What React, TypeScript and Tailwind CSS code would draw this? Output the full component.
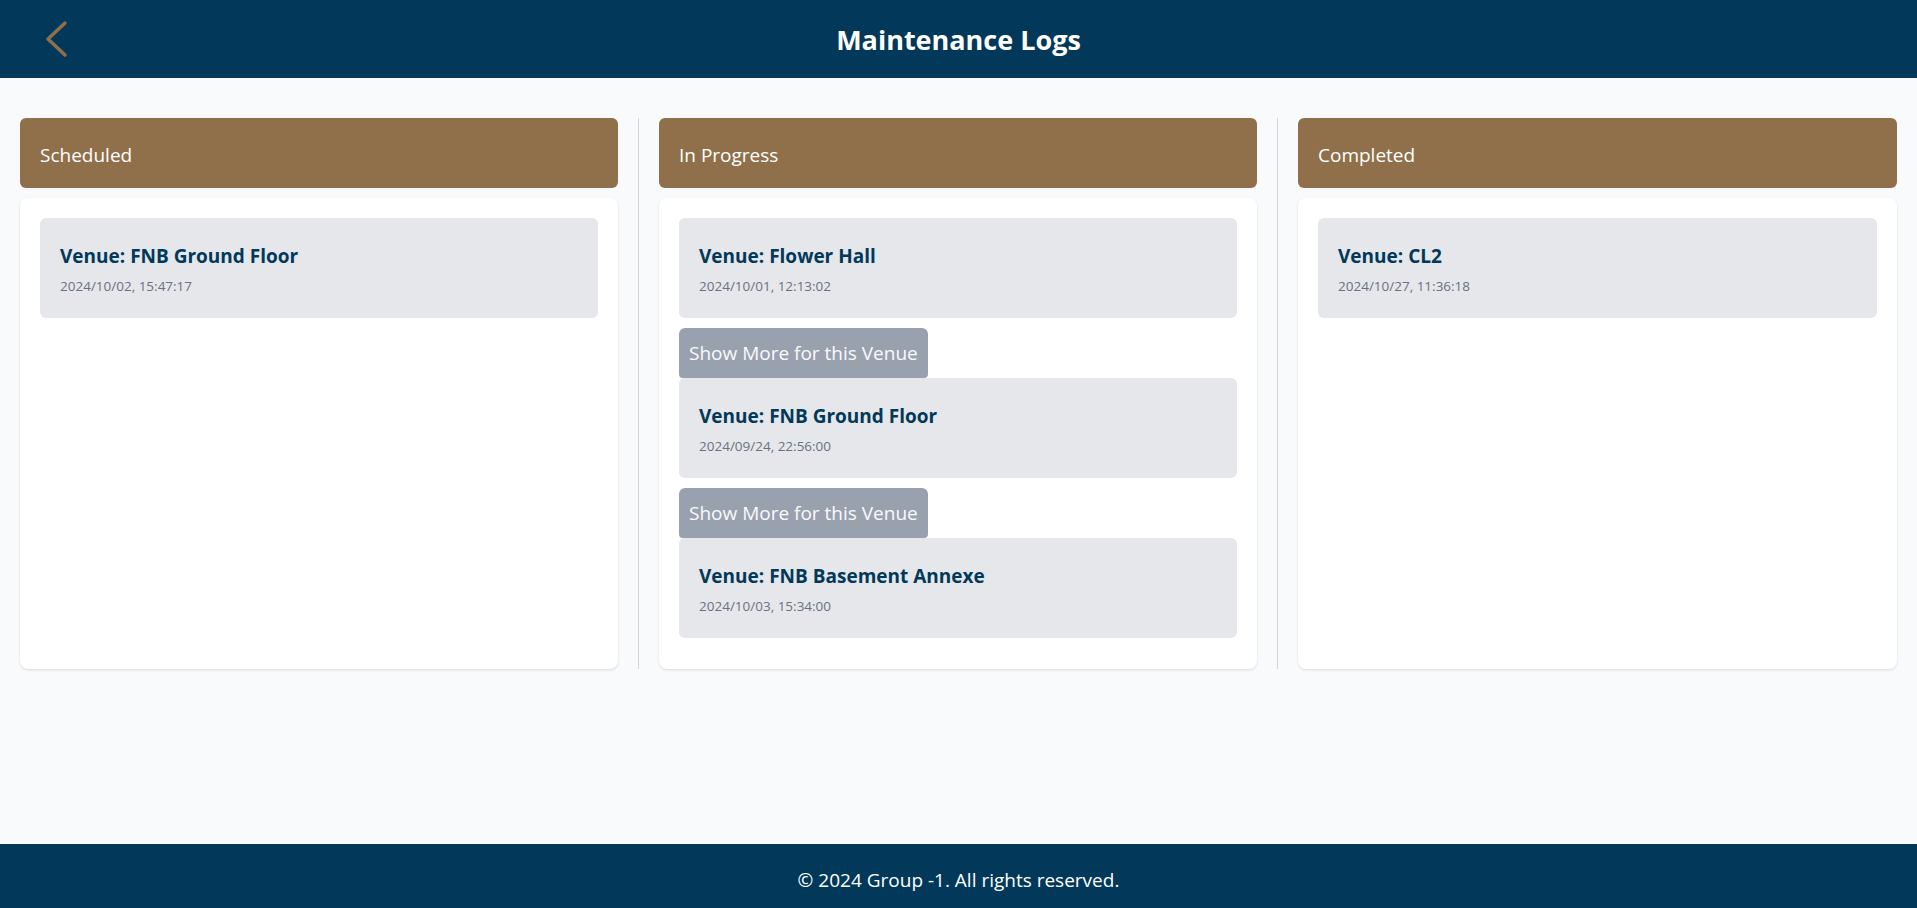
import React from "react";

type Log = { venue: string; time: string };

const columns: { title: string; logs: Log[]; showMore?: boolean }[] = [
  {
    title: "Scheduled",
    logs: [{ venue: "FNB Ground Floor", time: "2024/10/02, 15:47:17" }],
  },
  {
    title: "In Progress",
    showMore: true,
    logs: [
      { venue: "Flower Hall", time: "2024/10/01, 12:13:02" },
      { venue: "FNB Ground Floor", time: "2024/09/24, 22:56:00" },
      { venue: "FNB Basement Annexe", time: "2024/10/03, 15:34:00" },
    ],
  },
  {
    title: "Completed",
    logs: [{ venue: "CL2", time: "2024/10/27, 11:36:18" }],
  },
];

function LogItem({ log }: { log: Log }) {
  return (
    <div className="bg-gray-200 rounded-md px-5 pt-6 pb-[22px] mb-2.5">
      <h3 className="text-[19px] leading-7 font-bold text-[#023859] mb-1.5">
        Venue: {log.venue}
      </h3>
      <p className="text-[13.5px] leading-5 text-gray-500">{log.time}</p>
    </div>
  );
}

export default function App() {
  return (
    <div className="min-h-screen flex flex-col bg-gray-50 font-['Open_Sans',sans-serif]">
      {/* header */}
      <header className="relative h-[78px] bg-[#023859] flex items-center justify-center">
        <button className="absolute left-[44px] top-[20px] cursor-pointer">
          <svg width="26" height="38" viewBox="0 0 26 38" fill="none">
            <path
              d="M21 3 L4 19 L21 35"
              stroke="#8f704a"
              strokeWidth="3.5"
              strokeLinecap="round"
              strokeLinejoin="round"
            />
          </svg>
        </button>
        <h1 className="text-white text-[27px] font-bold pt-0.5">
          Maintenance Logs
        </h1>
      </header>

      {/* board */}
      <main className="flex-1 pt-10">
        <div className="grid grid-cols-3">
          {columns.map((col, i) => (
            <div
              key={col.title}
              className={`flex flex-col px-5 ${
                i < 2 ? "border-r border-gray-300" : ""
              }`}
            >
              <div className="bg-[#8f704a] rounded-md h-[70px] px-5 flex items-center mb-2.5">
                <h2 className="text-white text-[19px] pt-1">{col.title}</h2>
              </div>
              <div className="flex-1 bg-white rounded-lg shadow-sm p-5 pb-[21px]">
                {col.logs.map((log, j) => (
                  <div key={j}>
                    {col.showMore && j > 0 && (
                      <button className="bg-gray-400 text-gray-50 text-[19px] h-[50px] px-2.5 rounded-t-md rounded-b-sm">
                        Show More for this Venue
                      </button>
                    )}
                    <LogItem log={log} />
                  </div>
                ))}
              </div>
            </div>
          ))}
        </div>
      </main>

      {/* footer */}
      <footer className="h-16 bg-[#023859] flex items-center justify-center pt-2">
        <p className="text-white text-[19px]">
          © 2024 Group -1. All rights reserved.
        </p>
      </footer>
    </div>
  );
}
